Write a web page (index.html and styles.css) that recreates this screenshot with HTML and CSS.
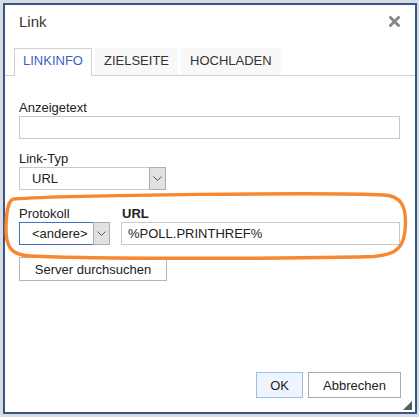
FILE: index.html
```html
<!DOCTYPE html>
<html lang="de">
<head>
    <meta charset="UTF-8">
    <meta name="viewport" content="width=device-width, initial-scale=1.0">
    <title>Link</title>
    <link rel="stylesheet" href="styles.css">
</head>
<body>

    <!-- Link dialog -->
    <div class="dialog">
        <div class="dialog-title">
            <span>Link</span>
            <svg class="close-icon" width="11" height="11" viewBox="0 0 11 11">
                <path d="M1.5 1.5 L9.5 9.5 M9.5 1.5 L1.5 9.5" stroke="#858585" stroke-width="2.8" stroke-linecap="square"/>
            </svg>
        </div>

        <!-- Tabs -->
        <div class="tabs">
            <div class="tab active">LINKINFO</div>
            <div class="tab">ZIELSEITE</div>
            <div class="tab">HOCHLADEN</div>
        </div>

        <div class="dialog-body">
            <label class="field-label first">Anzeigetext</label>
            <div class="text-input"></div>

            <label class="field-label">Link-Typ</label>
            <div class="select link-type">
                <span class="select-value">URL</span>
                <span class="select-arrow">
                    <svg width="9" height="5" viewBox="0 0 9 5"><path d="M0.5 0.5 L4.5 4.5 L8.5 0.5" fill="none" stroke="#555" stroke-width="1"/></svg>
                </span>
            </div>

            <div class="url-row">
                <div class="protocol">
                    <label class="field-label">Protokoll</label>
                    <div class="select focused">
                        <span class="select-value">&lt;andere&gt;</span>
                        <span class="select-arrow">
                            <svg width="9" height="5" viewBox="0 0 9 5"><path d="M0.5 0.5 L4.5 4.5 L8.5 0.5" fill="none" stroke="#555" stroke-width="1"/></svg>
                        </span>
                    </div>
                </div>
                <div class="url">
                    <label class="field-label bold">URL</label>
                    <div class="text-input">%POLL.PRINTHREF%</div>
                </div>
            </div>

            <button class="btn browse-btn">Server durchsuchen</button>
        </div>

        <!-- Footer buttons -->
        <div class="dialog-footer">
            <button class="btn ok-btn">OK</button>
            <button class="btn">Abbrechen</button>
        </div>

        <div class="resize-grip"></div>
    </div>

    <!-- Hand-drawn highlight -->
    <svg class="highlight" width="419" height="417" viewBox="0 0 419 417">
        <path d="M13 199 C 70 195, 330 192, 384 195 C 401 196, 406 206, 405.5 224 C 405 246, 398 255, 374 256.5 C 290 259, 90 259, 30 256 C 10 255, 5.5 246, 6 226 C 6.5 210, 8 202, 13 199"
              fill="none" stroke="#f7882f" stroke-width="3.4" stroke-linejoin="round"/>
    </svg>

</body>
</html>
```

FILE: styles.css
```css
/* Global Styles */
* {
    margin: 0;
    padding: 0;
    box-sizing: border-box;
    font-family: "Liberation Sans", Arial, sans-serif;
}

body {
    width: 419px;
    height: 417px;
    background-color: #d9dce0;
    padding: 3px 2px 3px 3px;
    position: relative;
    overflow: hidden;
}

/* Dialog */
.dialog {
    position: relative;
    height: 411px;
    background: white;
    border: 2px solid #35558f;
    display: flex;
    flex-direction: column;
    color: #222;
    font-size: 13px;
}

.dialog-title {
    height: 43px;
    padding: 8px 0 0 14px;
    font-size: 15px;
    line-height: 18px;
    color: #333;
    display: flex;
    justify-content: space-between;
}

.close-icon {
    margin: 3px 15px 0 0;
}

/* Tabs */
.tabs {
    display: flex;
    gap: 3px;
    padding-left: 9px;
    border-bottom: 1px solid #d1d1d1;
}

.tab {
    padding: 4px 8px 7px;
    line-height: 15px;
    background: #f8f8f8;
    border: 1px solid #f8f8f8;
    border-bottom: none;
    color: #333;
}

.tab.active {
    background: white;
    border-color: #d1d1d1;
    color: #3b5fbf;
    margin-bottom: -1px;
    padding-bottom: 8px;
}

/* Form */
.dialog-body {
    padding: 0 15px 0 14px;
    flex: 1;
}

.field-label {
    display: block;
    line-height: 16px;
    margin-top: 12px;
    color: #222;
}

.field-label.first {
    margin-top: 24px;
}

.field-label.bold {
    font-weight: bold;
    margin-left: 1px;
}

.text-input {
    height: 23px;
    border: 1px solid #c9c9c9;
    padding: 0 6px;
    line-height: 21px;
}

.select {
    display: flex;
    height: 23px;
    border: 1px solid #c9c9c9;
    background: white;
}

.select-value {
    flex: 1;
    padding-left: 12px;
    line-height: 21px;
}

.select-arrow {
    width: 17px;
    margin: -1px -1px -1px 0;
    background: #e1e1e1;
    border: 1px solid #adadad;
    display: flex;
    align-items: center;
    justify-content: center;
}

.link-type {
    width: 147px;
}

.select.focused {
    border-color: #4a70c4;
}

.url-row {
    display: flex;
    gap: 11px;
    margin-top: 4px;
}

.protocol {
    width: 91px;
}

.url {
    flex: 1;
}

.btn {
    height: 24px;
    padding: 0 14px;
    background: white;
    border: 1px solid #b5b5b5;
    font-size: 13px;
    color: #222;
}

.browse-btn {
    margin-top: 12px;
    width: 148px;
}

/* Footer */
.dialog-footer {
    display: flex;
    justify-content: flex-end;
    gap: 5px;
    padding: 0 14px 14px 0;
}

.dialog-footer .btn {
    height: 26px;
    border-color: #aaa;
}

.dialog-footer .ok-btn {
    width: 47px;
    padding: 0;
    background: #eff5ff;
    border-color: #9ac0f0;
}

.resize-grip {
    position: absolute;
    right: 3px;
    bottom: 2px;
    width: 0;
    height: 0;
    border-left: 9px solid transparent;
    border-bottom: 9px solid #5a5a5a;
}

.highlight {
    position: absolute;
    left: 0;
    top: 0;
    pointer-events: none;
}
```
